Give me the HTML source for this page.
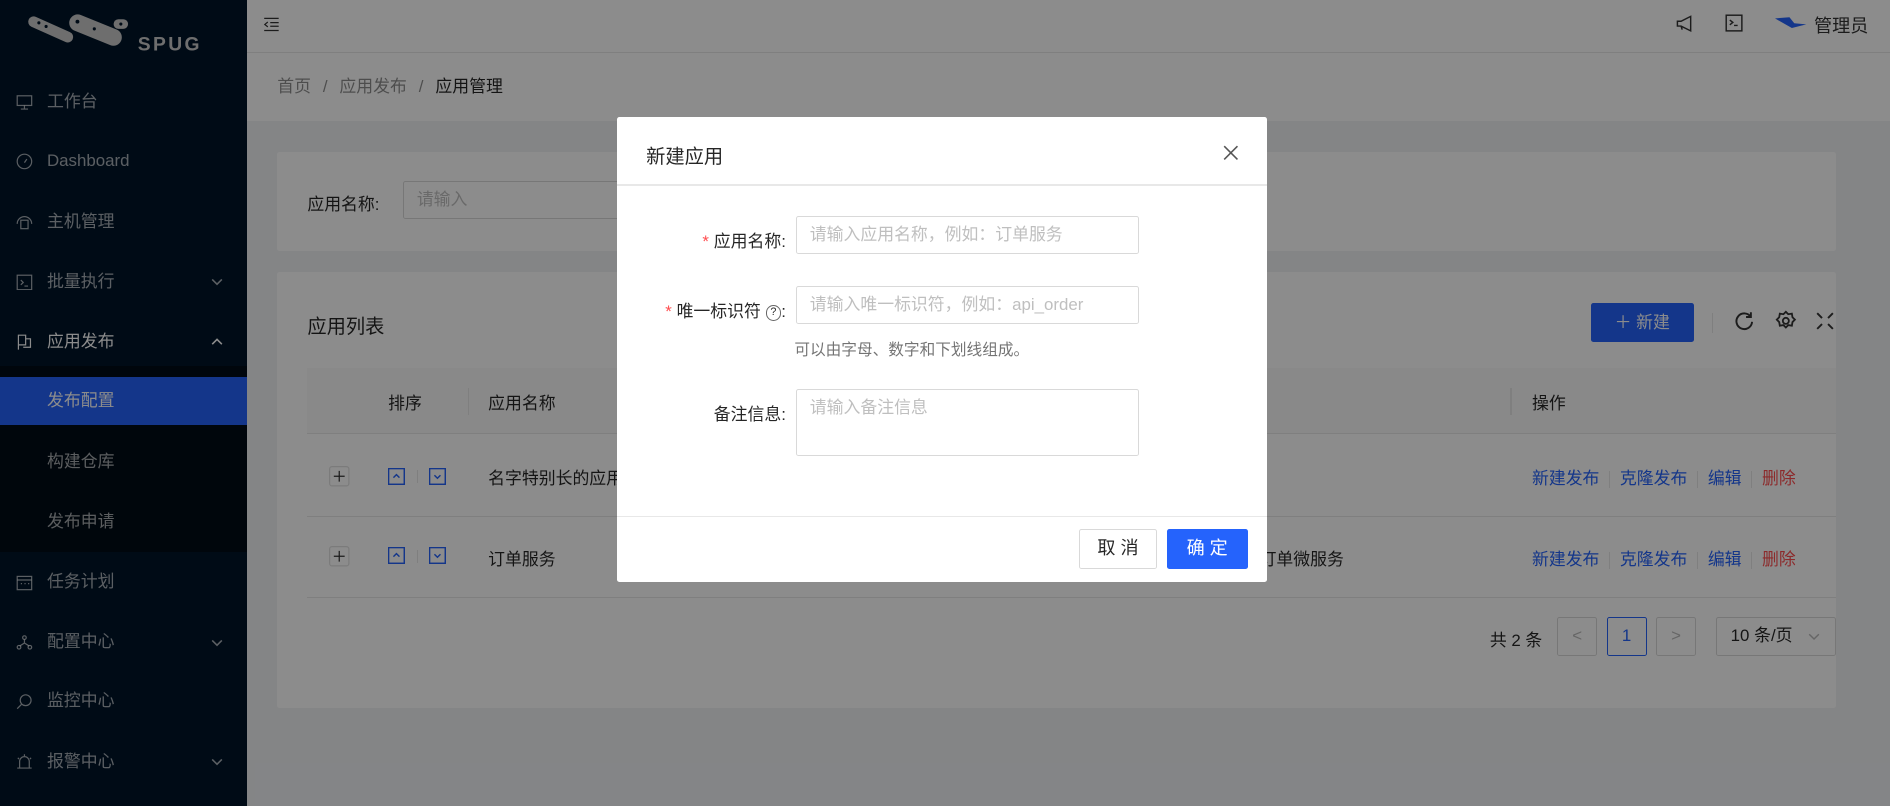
<!DOCTYPE html>
<html><head><meta charset="utf-8"><style>
*{box-sizing:border-box;margin:0;padding:0}
html,body{width:1890px;height:806px;overflow:hidden;background:#f0f2f5}
#w{position:absolute;left:0;top:0;width:1568px;height:669px;zoom:1.20536;font-family:"Liberation Sans","Noto Sans CJK SC",sans-serif;font-size:14px;color:rgba(0,0,0,.85);background:#f0f2f5}
.abs{position:absolute}
.side{left:0;top:0;width:205px;height:669px;background:#001529}
.mi{position:absolute;left:0;width:205px;height:40px;line-height:40px;color:rgba(255,255,255,.65);font-size:14px;padding-left:39px}
.mi svg{position:absolute;left:13px;top:13px}
.mi svg.arr{left:auto;right:20px;top:16px}
.hdr{left:205px;top:0;width:1363px;height:44px;background:#fff;border-bottom:1px solid #e8e8e8}
.bc{left:205px;top:44px;width:1363px;height:56px;background:#fff;line-height:56px;padding-left:25px;color:rgba(0,0,0,.45)}
.card{background:#fff;border-radius:2px}
.ov{left:0;top:0;width:1568px;height:669px;background:rgba(0,0,0,.45)}
.modal{left:512px;top:97px;width:539px;height:386px;background:#fff;border-radius:2px}
.inp{position:absolute;border:1px solid #d9d9d9;border-radius:2px;height:32px;line-height:30px;padding-left:11px;color:#bfbfbf;background:#fff}
.lbl{position:absolute;right:399px;text-align:right;color:rgba(0,0,0,.85)}
.req{color:#ff4d4f;font-family:"Liberation Sans";margin-right:4px}
a{color:#2563fc;text-decoration:none}
.sep{display:inline-block;width:1px;height:14px;background:#e8e8e8;margin:0 8px;vertical-align:middle}
.sb{position:absolute;width:14px;height:14px}
.pg{position:absolute;top:512px;height:32px;border:1px solid #d9d9d9;border-radius:2px;text-align:center;line-height:30px;background:#fff}
</style></head><body><div id="w">
<div class="abs side">
  <svg class="abs" style="left:18px;top:10px" width="165" height="36" viewBox="0 0 165 36"><g fill="#c8c8c8"><rect x="4" y="10" width="40" height="9" rx="4.5" transform="rotate(24 24 14)"/><rect x="38" y="8" width="46" height="14" rx="7" transform="rotate(22 61 15)"/><rect x="76" y="6" width="12" height="8" rx="4"/></g><g fill="#001529"><circle cx="14" cy="9" r="1.3"/><circle cx="20" cy="12" r="1.3"/><circle cx="46" cy="8" r="1.6"/><circle cx="60" cy="14" r="1.3"/><circle cx="82" cy="10" r="1.3"/></g><text x="96" y="32" font-family="Liberation Sans" font-weight="bold" font-size="16" fill="#c8c8c8" letter-spacing="2">SPUG</text></svg>
  <div class="mi" style="top:65px"><svg width="14" height="14" viewBox="0 0 14 14" fill="none" stroke="rgba(255,255,255,.65)"><rect x="1" y="1.5" width="12" height="8"/><path d="M7 9.5v3M4 12.5h6"/></svg>工作台</div>
  <div class="mi" style="top:114px"><svg width="14" height="14" viewBox="0 0 14 14" fill="none" stroke="rgba(255,255,255,.65)"><circle cx="7" cy="7" r="6"/><path d="M7 8l2-3"/></svg>Dashboard</div>
  <div class="mi" style="top:164px"><svg width="14" height="14" viewBox="0 0 14 14" fill="none" stroke="rgba(255,255,255,.65)"><path d="M1 9a6 6 0 0 1 12 0"/><rect x="4" y="6" width="6" height="7"/></svg>主机管理</div>
  <div class="mi" style="top:214px"><svg width="14" height="14" viewBox="0 0 14 14" fill="none" stroke="rgba(255,255,255,.65)"><rect x="1" y="1" width="12" height="12"/><path d="M4 5l2 2-2 2M7 10h3"/></svg>批量执行<svg class="arr" width="10" height="8" viewBox="0 0 10 8" fill="none" stroke="rgba(255,255,255,.65)" stroke-width="1.3"><path d="M1 2l4 4 4-4"/></svg></div>
  <div class="mi" style="top:264px;color:#fff"><svg width="14" height="14" viewBox="0 0 14 14" fill="none" stroke="#fff"><path d="M2 13V1h6v8H2M8 4h4v7H6"/></svg>应用发布<svg class="arr" width="10" height="8" viewBox="0 0 10 8" fill="none" stroke="#fff" stroke-width="1.3"><path d="M1 6l4-4 4 4"/></svg></div>
  <div class="abs" style="left:0;top:304px;width:205px;height:154px;background:#000c17"></div>
  <div class="mi" style="top:313px;background:#2563fc;color:#fff;padding-left:39px">发布配置</div>
  <div class="mi" style="top:363px">构建仓库</div>
  <div class="mi" style="top:413px">发布申请</div>
  <div class="mi" style="top:463px"><svg width="14" height="14" viewBox="0 0 14 14" fill="none" stroke="rgba(255,255,255,.65)"><rect x="1" y="2" width="12" height="11"/><path d="M1 5h12M4 8h1M7 8h1M10 8h1"/></svg>任务计划</div>
  <div class="mi" style="top:513px"><svg width="14" height="14" viewBox="0 0 14 14" fill="none" stroke="rgba(255,255,255,.65)"><circle cx="7" cy="3" r="1.5"/><circle cx="2.5" cy="11" r="1.5"/><circle cx="11.5" cy="11" r="1.5"/><path d="M7 4.5v3L3 10M7 7.5l4 2.5"/></svg>配置中心<svg class="arr" width="10" height="8" viewBox="0 0 10 8" fill="none" stroke="rgba(255,255,255,.65)" stroke-width="1.3"><path d="M1 2l4 4 4-4"/></svg></div>
  <div class="mi" style="top:562px"><svg width="14" height="14" viewBox="0 0 14 14" fill="none" stroke="rgba(255,255,255,.65)"><circle cx="8" cy="6" r="4.5"/><path d="M4.5 9.5L1 13"/></svg>监控中心</div>
  <div class="mi" style="top:612px"><svg width="14" height="14" viewBox="0 0 14 14" fill="none" stroke="rgba(255,255,255,.65)"><path d="M3 12V7a4 4 0 0 1 8 0v5M1 12.5h12M7 1v1.5M1.5 4l1 1M12.5 4l-1 1"/></svg>报警中心<svg class="arr" width="10" height="8" viewBox="0 0 10 8" fill="none" stroke="rgba(255,255,255,.65)" stroke-width="1.3"><path d="M1 2l4 4 4-4"/></svg></div>
</div>
<div class="abs hdr">
  <svg class="abs" style="left:13px;top:13px" width="14" height="14" viewBox="0 0 14 14" fill="none" stroke="#333"><path d="M1 2h12M6 5.5h7M6 8.5h7M1 12h12M4 5L1.5 7 4 9"/></svg>
  <svg class="abs" style="left:1185px;top:12px" width="16" height="16" viewBox="0 0 16 16" fill="none" stroke="#333" stroke-width="1.2"><path d="M2 6h3l8-4v12L5 10H2zM5 10l1 3"/></svg>
  <svg class="abs" style="left:1226px;top:12px" width="15" height="15" viewBox="0 0 15 15" fill="none" stroke="#333" stroke-width="1.2"><rect x="1" y="1" width="13" height="13"/><path d="M4 5l2.5 2L4 9M7.5 9.5h3"/></svg>
  <svg class="abs" style="left:1268px;top:13px" width="26" height="12" viewBox="0 0 26 12"><path d="M0 2l14 8 12-3-10-1-4-5z" fill="#2563fc"/></svg>
  <span class="abs" style="left:1300px;top:10px;font-size:15px;color:#333">管理员</span>
</div>
<div class="abs bc">首页 <span style="margin:0 6px">/</span> 应用发布 <span style="margin:0 6px">/</span> <span style="color:rgba(0,0,0,.85)">应用管理</span></div>
<div class="abs card" style="left:230px;top:126px;width:1293px;height:82px">
  <span class="abs" style="left:25px;top:32px">应用名称:</span>
  <div class="inp" style="left:104px;top:24px;width:300px">请输入</div>
</div>
<div class="abs card" style="left:230px;top:226px;width:1293px;height:361px">
  <span class="abs" style="left:25px;top:32px;font-size:16px">应用列表</span>
  <div class="abs" style="left:1090px;top:25px;width:85px;height:33px;background:#2563fc;border-radius:2px;color:#fff;line-height:33px;text-align:center">＋ 新建</div>
  <div class="abs" style="left:1190px;top:34px;width:1px;height:16px;background:#e8e8e8"></div>
  <svg class="abs" style="left:1209px;top:32px" width="17" height="17" viewBox="0 0 17 17" fill="none" stroke="#333" stroke-width="1.6"><path d="M14 5A6.5 6.5 0 1 0 15 9"/><path d="M14 1v4h-4"/></svg>
  <svg class="abs" style="left:1243px;top:31px" width="18" height="18" viewBox="0 0 18 18" fill="none" stroke="#333" stroke-width="1.5"><circle cx="9" cy="9" r="2.5"/><path d="M9 1.5l2 2 3-.5.5 3 2 2-2 2-.5 3-3-.5-2 2-2-2-3 .5-.5-3-2-2 2-2 .5-3 3 .5z"/></svg>
  <svg class="abs" style="left:1277px;top:33px" width="15" height="15" viewBox="0 0 15 15" fill="none" stroke="#333" stroke-width="1.6"><path d="M1 1l4 4M14 1l-4 4M1 14l4-4M14 14l-4-4"/></svg>
  <div class="abs" style="left:25px;top:79px;width:1268px;height:55px;background:#fafafa;border-bottom:1px solid #e8e8e8"></div>
  <span class="abs" style="left:92px;top:97px">排序</span>
  <div class="abs" style="left:158px;top:96px;width:1px;height:22px;background:#e8e8e8"></div>
  <span class="abs" style="left:175px;top:97px">应用名称</span>
  <div class="abs" style="left:1023px;top:96px;width:1px;height:22px;background:#e8e8e8"></div>
  <span class="abs" style="left:1041px;top:97px">操作</span>
  <div class="abs" style="left:25px;top:202px;width:1268px;height:1px;background:#e8e8e8"></div>
  <div class="abs" style="left:25px;top:269px;width:1268px;height:1px;background:#e8e8e8"></div>
  <svg class="abs" style="left:43px;top:161px" width="17" height="17" viewBox="0 0 17 17" fill="none"><rect x=".5" y=".5" width="16" height="16" rx="2" stroke="#e0e0e0"/><path d="M4 8.5h9M8.5 4v9" stroke="#333"/></svg>
  <svg class="abs" style="left:43px;top:227px" width="17" height="17" viewBox="0 0 17 17" fill="none"><rect x=".5" y=".5" width="16" height="16" rx="2" stroke="#e0e0e0"/><path d="M4 8.5h9M8.5 4v9" stroke="#333"/></svg>
  <svg class="sb" style="left:92px;top:162px" viewBox="0 0 14 14" fill="none" stroke="#2563fc" stroke-width="1.2"><rect x=".5" y=".5" width="13" height="13"/><path d="M4.5 8l2.5-2.5L9.5 8"/></svg>
  <svg class="sb" style="left:126px;top:162px" viewBox="0 0 14 14" fill="none" stroke="#2563fc" stroke-width="1.2"><rect x=".5" y=".5" width="13" height="13"/><path d="M4.5 6l2.5 2.5L9.5 6"/></svg>
  <div class="abs" style="left:116px;top:164px;width:1px;height:11px;background:#e8e8e8"></div>
  <svg class="sb" style="left:92px;top:228px" viewBox="0 0 14 14" fill="none" stroke="#2563fc" stroke-width="1.2"><rect x=".5" y=".5" width="13" height="13"/><path d="M4.5 8l2.5-2.5L9.5 8"/></svg>
  <svg class="sb" style="left:126px;top:228px" viewBox="0 0 14 14" fill="none" stroke="#2563fc" stroke-width="1.2"><rect x=".5" y=".5" width="13" height="13"/><path d="M4.5 6l2.5 2.5L9.5 6"/></svg>
  <div class="abs" style="left:116px;top:230px;width:1px;height:11px;background:#e8e8e8"></div>
  <span class="abs" style="left:175px;top:159px">名字特别长的应用</span>
  <span class="abs" style="left:175px;top:226px">订单服务</span>
  <span class="abs" style="left:815px;top:226px">订单微服务</span>
  <div class="abs" style="left:1041px;top:159px;white-space:nowrap"><a>新建发布</a><span class="sep"></span><a>克隆发布</a><span class="sep"></span><a>编辑</a><span class="sep"></span><a style="color:#ff4d4f">删除</a></div>
  <div class="abs" style="left:1041px;top:226px;white-space:nowrap"><a>新建发布</a><span class="sep"></span><a>克隆发布</a><span class="sep"></span><a>编辑</a><span class="sep"></span><a style="color:#ff4d4f">删除</a></div>
</div>
<span class="abs" style="left:1236px;top:519px">共 2 条</span>
<div class="pg" style="left:1292px;width:33px;color:#bbb">&lt;</div>
<div class="pg" style="left:1333px;width:33px;border-color:#2563fc;color:#2563fc">1</div>
<div class="pg" style="left:1374px;width:33px;color:#bbb">&gt;</div>
<div class="pg" style="left:1424px;width:99px;text-align:left;padding-left:11px">10 条/页<svg style="position:absolute;right:12px;top:12px" width="10" height="7" viewBox="0 0 10 7" fill="none" stroke="#bbb" stroke-width="1.2"><path d="M1 1l4 4 4-4"/></svg></div>
<div class="abs ov"></div>
<div class="abs modal">
  <span class="abs" style="left:24px;top:20px;font-size:16px">新建应用</span>
  <svg class="abs" style="left:503px;top:23px" width="13" height="13" viewBox="0 0 13 13" stroke="#555" stroke-width="1.3"><path d="M1 1l11 11M12 1L1 12"/></svg>
  <div class="abs" style="left:0;top:56px;width:539px;height:1px;background:#e8e8e8"></div>
  <div class="lbl" style="top:91px"><span class="req">*</span>应用名称:</div>
  <div class="inp" style="left:148px;top:82px;width:285px">请输入应用名称，例如：订单服务</div>
  <div class="lbl" style="top:149px"><span class="req">*</span>唯一标识符 <span style="display:inline-block;width:13px;height:13px;border:1px solid #666;border-radius:50%;font-size:9px;line-height:11px;text-align:center;vertical-align:1px">?</span>:</div>
  <div class="inp" style="left:148px;top:140px;width:285px">请输入唯一标识符，例如：api_order</div>
  <span class="abs" style="left:147px;top:183px;font-size:13px;color:rgba(0,0,0,.55)">可以由字母、数字和下划线组成。</span>
  <div class="lbl" style="top:235px">备注信息:</div>
  <div class="inp" style="left:148px;top:226px;width:285px;height:55px;line-height:20px;padding-top:5px">请输入备注信息</div>
  <div class="abs" style="left:0;top:331px;width:539px;height:1px;background:#e8e8e8"></div>
  <div class="abs" style="left:383px;top:342px;width:65px;height:33px;border:1px solid #d9d9d9;border-radius:2px;text-align:center;line-height:31px;font-size:15px">取 消</div>
  <div class="abs" style="left:456px;top:342px;width:67px;height:33px;background:#2563fc;border-radius:2px;text-align:center;line-height:33px;color:#fff;font-size:15px">确 定</div>
</div>
</div></body></html>
